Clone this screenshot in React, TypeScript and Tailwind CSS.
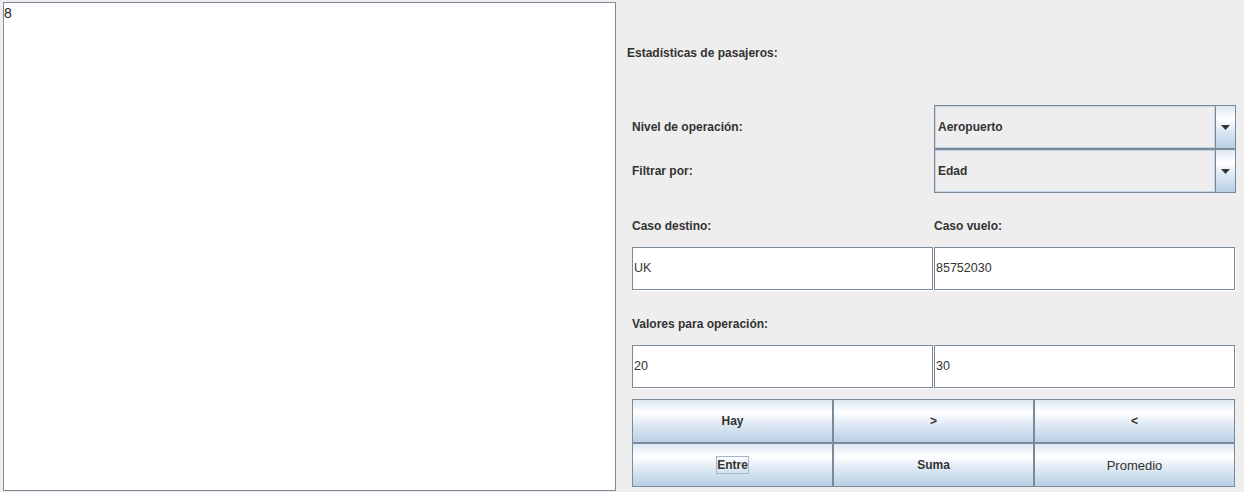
import React from "react";

const btnBg =
  "bg-[linear-gradient(to_bottom,#dde8f3_0%,#ffffff_30%,#dde8f3_60%,#b8cfe5_100%)]";

function Combo({ value }: { value: string }) {
  return (
    <div className="flex h-[44px] w-[302px] border border-[#7a8a99] bg-[#eeeeee]">
      <div className="flex flex-1 items-center border border-[#c3d4e6] pl-[2px] font-bold text-[#333333]">
        {value}
      </div>
      <div className={`flex w-[20px] items-center justify-center border-l border-[#7a8a99] ${btnBg}`}>
        <svg width="9" height="5" viewBox="0 0 9 5" aria-hidden>
          <path d="M0 0h9L4.5 5z" fill="#333333" />
        </svg>
      </div>
    </div>
  );
}

function Field({ value, w }: { value: string; w: string }) {
  return (
    <div className={`flex h-[43px] items-center border border-[#7a8a99] bg-white pl-[1px] text-[12.5px] text-[#333333] shadow-[1px_1px_0_#ffffff] ${w}`}>
      {value}
    </div>
  );
}

function Btn({ label, bold = true, focus = false }: { label: string; bold?: boolean; focus?: boolean }) {
  return (
    <div className={`flex h-[44px] items-center justify-center border border-[#7a8a99] text-[#333333] ${btnBg} ${bold ? "font-bold" : "text-[13px]"}`}>
      <span className={focus ? "border border-[#a3b8cc] leading-[16px]" : "pt-[1px]"}>{label}</span>
    </div>
  );
}

export default function App() {
  return (
    <div className="flex h-[492px] w-[1244px] bg-[#eeeeee] text-[12px] leading-[15px] [font-family:'Liberation_Sans',Arial,sans-serif]">
      <div className="ml-[3px] mt-[2px] h-[489px] w-[613px] border border-[#7a8a99] bg-white pt-[1px] text-[14px] leading-[18px] text-[#222222]">
        8
      </div>

      <div className="flex flex-1 flex-col pl-[16px]">
        <div className="-ml-[5px] mt-[46px] font-bold text-[#333333]">Estadísticas de pasajeros:</div>

        <div className="mt-[44px] flex">
          <div className="flex w-[302px] items-center pt-[1px] font-bold text-[#333333]">Nivel de operación:</div>
          <Combo value="Aeropuerto" />
        </div>
        <div className="flex">
          <div className="flex w-[302px] items-center pt-[1px] font-bold text-[#333333]">Filtrar por:</div>
          <Combo value="Edad" />
        </div>

        <div className="mt-[26px] flex font-bold text-[#333333]">
          <div className="w-[302px]">Caso destino:</div>
          <div>Caso vuelo:</div>
        </div>
        <div className="mt-[13px] flex gap-[1px]">
          <Field value="UK" w="w-[301px]" />
          <Field value="85752030" w="w-[301px]" />
        </div>

        <div className="mt-[27px] font-bold text-[#333333]">Valores para operación:</div>
        <div className="mt-[13px] flex gap-[1px]">
          <Field value="20" w="w-[301px]" />
          <Field value="30" w="w-[301px]" />
        </div>

        <div className="mt-[11px] grid w-[603px] grid-cols-3">
          <Btn label="Hay" />
          <Btn label=">" />
          <Btn label="<" />
          <Btn label="Entre" focus />
          <Btn label="Suma" />
          <Btn label="Promedio" bold={false} />
        </div>
      </div>
    </div>
  );
}
